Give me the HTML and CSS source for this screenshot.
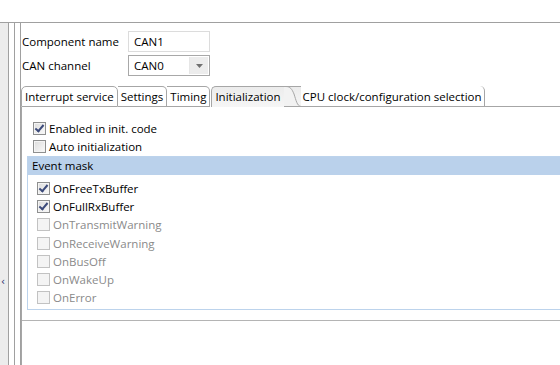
FILE: index.html
```html
<!DOCTYPE html>
<html lang="en">
<head>
    <meta charset="UTF-8">
    <title>CAN component</title>
    <link rel="stylesheet" href="styles.css">
</head>
<body>
    <div class="topbar"></div>

    <div class="main">
        <!-- Collapsed side view -->
        <div class="sidebar">
            <span class="restore">&lsaquo;</span>
        </div>
        <div class="sash"></div>

        <!-- Component inspector -->
        <div class="editor">
            <div class="form">
                <label>Component name</label>
                <div class="textbox">CAN1</div>
                <label>CAN channel</label>
                <div class="combo">
                    <span>CAN0</span>
                    <span class="combo-btn">
                        <svg width="7" height="4" viewBox="0 0 7 4"><path d="M0 0h7L3.5 4z" fill="#707070"/></svg>
                    </span>
                </div>
            </div>

            <div class="tabs">
                <div class="tab first">Interrupt service</div>
                <div class="tab">Settings</div>
                <div class="tab">Timing</div>
                <div class="tab selected">
                    <span>Initialization</span>
                    <svg class="curve" width="17" height="21" viewBox="0 0 17 21">
                        <path d="M0 0.5H2C6 0.5 8 3 10 8C12 14 13 20 17 20.5V21H0Z" fill="#f2f2f2"/>
                        <path d="M0 0.5H2C6 0.5 8 3 10 8C12 14 13 20 17 20.5" fill="none" stroke="#a6a6a6"/>
                        <path d="M2 0.5H17" stroke="#a6a6a6"/>
                    </svg>
                </div>
                <div class="tab last">CPU clock/configuration selection</div>
                <div class="tab-fill"></div>
            </div>

            <div class="panel">
                <div class="content">
                    <div class="check"><span class="box on"></span>Enabled in init. code</div>
                    <div class="check"><span class="box"></span>Auto initialization</div>

                    <div class="group">
                        <div class="group-title">Event mask</div>
                        <div class="group-body">
                            <div class="check"><span class="box on"></span>OnFreeTxBuffer</div>
                            <div class="check"><span class="box on"></span>OnFullRxBuffer</div>
                            <div class="check off"><span class="box"></span>OnTransmitWarning</div>
                            <div class="check off"><span class="box"></span>OnReceiveWarning</div>
                            <div class="check off"><span class="box"></span>OnBusOff</div>
                            <div class="check off"><span class="box"></span>OnWakeUp</div>
                            <div class="check off"><span class="box"></span>OnError</div>
                        </div>
                    </div>
                </div>
                <div class="footer"></div>
            </div>
        </div>
    </div>
</body>
</html>
```

FILE: styles.css
```css
* {
    margin: 0;
    padding: 0;
    box-sizing: border-box;
}
body {
    width: 560px;
    height: 365px;
    overflow: hidden;
    background: #fff;
    color: #000;
    font-family: "Open Sans", "Liberation Sans", sans-serif;
    font-size: 11.5px;
}

/* Top area */
.topbar {
    height: 23px;
    border-bottom: 1px solid #a0a0a0;
}

.main {
    display: flex;
    height: 342px;
}

/* Left collapsed view */
.sidebar {
    width: 9px;
    background: #ececec;
    border-right: 1px solid #a0a0a0;
    padding-top: 252px;
    font-family: "DejaVu Sans", sans-serif;
    font-size: 10px;
    line-height: 14px;
    color: #1a2a6a;
}
.restore {
    display: block;
    padding-left: 1px;
}
.sash {
    width: 12px;
    border-left: 5px solid #fff;
    border-right: 1px solid #a0a0a0;
    box-shadow: inset 1px 0 0 #a0a0a0;
}

.editor {
    flex: 1;
    display: flex;
    flex-direction: column;
    padding-top: 8px;
}

/* Name / channel */
.form {
    display: grid;
    grid-template-columns: 106px 82px;
    row-gap: 3px;
    align-items: center;
    padding-left: 1px;
}
.form label {
    line-height: 21px;
}
.textbox,
.combo {
    height: 21px;
    border: 1px solid #dcdcdc;
    padding-left: 5px;
    line-height: 19px;
}
.combo {
    display: flex;
    justify-content: space-between;
    border-color: #a8a8a8;
}
.combo-btn {
    width: 19px;
    display: flex;
    align-items: center;
    justify-content: center;
    background: #ececec;
    border-left: 1px solid #e6e6e6;
    margin: 1px;
}

/* Tabs */
.tabs {
    display: flex;
    margin-top: 10px;
    height: 21px;
}
.tab {
    height: 21px;
    line-height: 19px;
    padding: 0 3px;
    border: 1px solid #a6a6a6;
    border-left: none;
    border-radius: 0 5px 0 0;
    background: #fff;
}
.tab.first {
    border-left: 1px solid #a6a6a6;
    border-radius: 5px 5px 0 0;
}
.tab.selected {
    display: flex;
    padding-right: 0;
    border-right: none;
    border-bottom: none;
    border-radius: 5px 0 0 0;
    border-left: 1px solid #a6a6a6;
    background: linear-gradient(#ececec, #f6f6f6);
    margin-left: 1px;
}
.curve {
    display: block;
    margin-top: -1px;
    margin-left: 3px;
}
.tab.last {
    border-top: none;
    padding-top: 1px;
    padding-right: 2px;
    margin-left: -17px;
    padding-left: 19px;
    background: transparent;
}
.tab-fill {
    flex: 1;
    border-bottom: 1px solid #a6a6a6;
}

/* Tab content */
.panel {
    flex: 1;
    display: flex;
    flex-direction: column;
    border-left: 1px solid #a6a6a6;
}
.content {
    height: 213px;
    padding: 12px 0 0 5px;
}
.footer {
    flex: 1;
    border-top: 1px solid #b4b4b4;
}

.check {
    display: flex;
    align-items: center;
    height: 18px;
    padding-left: 6px;
}
.box {
    width: 13px;
    height: 13px;
    margin-right: 3px;
    border: 1px solid #8e8f8f;
    background: linear-gradient(135deg, #dcdcdc, #fafafa);
    box-shadow: inset 0 0 0 1px #f4f4f4;
}
.box.on {
    position: relative;
}
.box.on::after {
    content: "";
    position: absolute;
    left: 3px;
    top: 0px;
    width: 3px;
    height: 7px;
    border: solid #3c4a7a;
    border-width: 0 2px 2px 0;
    transform: rotate(40deg);
}
.check.off {
    color: #8a8a8a;
}
.check.off .box {
    border-color: #c2c2c2;
    background: #f4f4f4;
    box-shadow: none;
}

/* Event mask group */
.group {
    margin-top: 1px;
    border: 1px solid #bcd3ec;
    border-right: none;
    height: 154px;
}
.group-title {
    height: 18px;
    line-height: 17px;
    background: #bad1eb;
    padding-left: 4px;
}
.group-body {
    padding: 4px 0 0 3px;
}
.group-body .check {
    height: 18.3px;
}
```
